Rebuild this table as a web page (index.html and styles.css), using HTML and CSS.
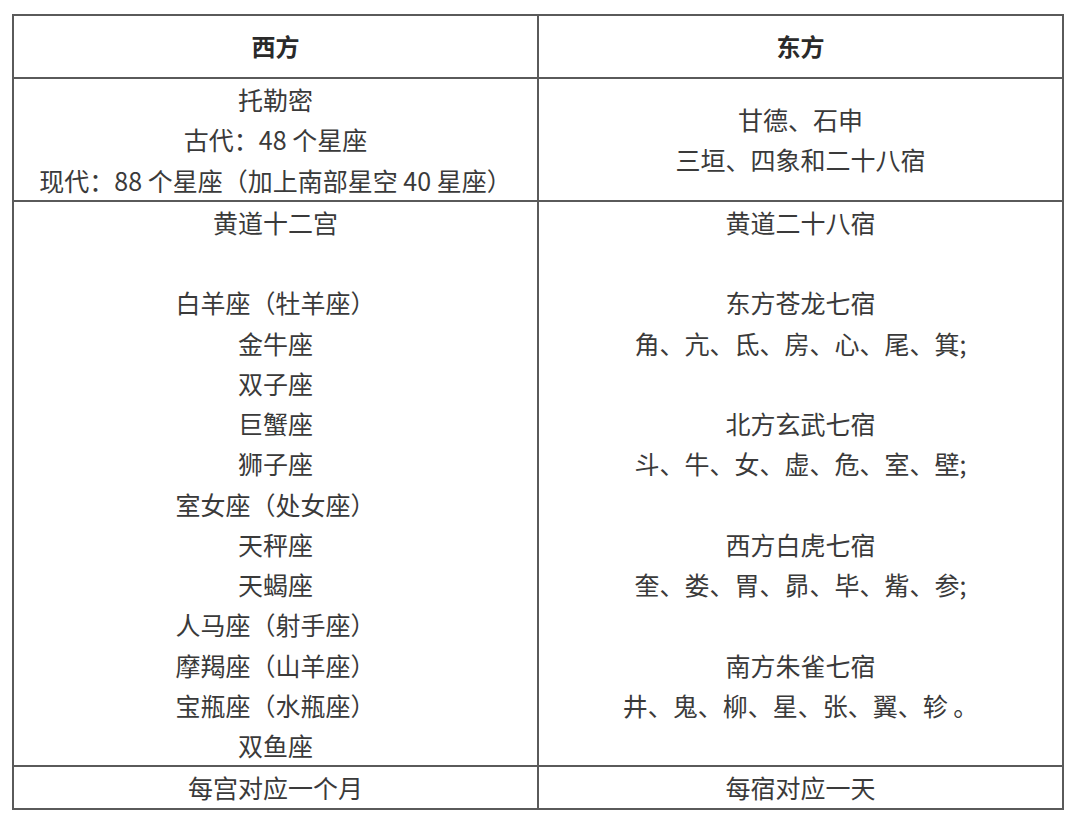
FILE: index.html
```html
<!DOCTYPE html>
<html lang="zh">
<head>
<meta charset="utf-8">
<link rel="stylesheet" href="styles.css">
</head>
<body>
<table class="cmp">
  <colgroup><col class="c"><col class="c"></colgroup>
  <thead>
    <tr class="head"><th>西方</th><th>东方</th></tr>
  </thead>
  <tbody>
    <tr class="r2">
      <td>托勒密<br>古代：48 个星座<br>现代：88 个星座（加上南部星空 40 星座）</td>
      <td>甘德、石申<br>三垣、四象和二十八宿</td>
    </tr>
    <tr class="r3">
      <td>黄道十二宫<br><br>白羊座（牡羊座）<br>金牛座<br>双子座<br>巨蟹座<br>狮子座<br>室女座（处女座）<br>天秤座<br>天蝎座<br>人马座（射手座）<br>摩羯座（山羊座）<br>宝瓶座（水瓶座）<br>双鱼座</td>
      <td>黄道二十八宿<br><br>东方苍龙七宿<br>角、亢、氐、房、心、尾、箕;<br><br>北方玄武七宿<br>斗、牛、女、虚、危、室、壁;<br><br>西方白虎七宿<br>奎、娄、胃、昴、毕、觜、参;<br><br>南方朱雀七宿<br>井、鬼、柳、星、张、翼、轸 。<br>&nbsp;</td>
    </tr>
    <tr class="r4">
      <td>每宫对应一个月</td>
      <td>每宿对应一天</td>
    </tr>
  </tbody>
</table>
</body>
</html>
```
FILE: styles.css
```css
html, body {
  margin: 0;
  padding: 0;
  background: #ffffff;
}
body {
  padding: 14px 0 0 12px;
  font-family: "Noto Sans CJK SC", "Noto Sans", sans-serif;
  color: #3a3a3a;
}
.cmp {
  border-collapse: collapse;
  width: 1052px;
  table-layout: fixed;
  font-size: 25px;
}
.cmp .c {
  width: 50%;
}
.cmp th, .cmp td {
  border: 2px solid #5a5a5a;
  padding: 0;
  text-align: center;
  line-height: 40.25px;
}
.cmp th {
  font-weight: 700;
  color: #2a2a2a;
  font-size: 24px;
}
.head th {
  height: 61px;
}
.r2 td {
  height: 120px;
  vertical-align: middle;
}
.r3 td {
  vertical-align: top;
}
.r4 td {
  height: 40px;
}
```
